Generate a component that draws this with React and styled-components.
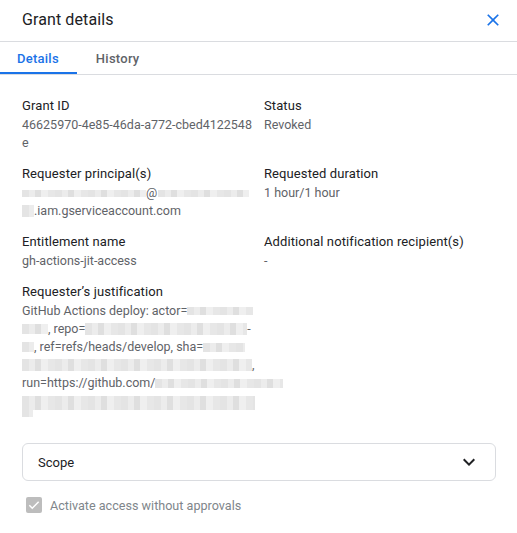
import React from "react";
import styled, { createGlobalStyle } from "styled-components";

const Global = createGlobalStyle`
  html, body { margin: 0; padding: 0; background: #fff; }
  body { font-family: Roboto, "Noto Sans", Arial, sans-serif; -webkit-font-smoothing: antialiased; }
  * { box-sizing: border-box; }
`;

const Panel = styled.div`
  width: 517px;
  height: 533px;
  background: #fff;
  display: flex;
  flex-direction: column;
  overflow: hidden;
`;

const Header = styled.header`
  height: 42px;
  display: flex;
  align-items: center;
  justify-content: space-between;
  padding: 0 14px 2px 22px;
  border-bottom: 1px solid #dadce0;
`;

const Title = styled.h1`
  margin: 0;
  font-size: 16px;
  font-weight: 400;
  color: #202124;
  letter-spacing: 0.1px;
`;

const IconButton = styled.button`
  border: 0;
  background: none;
  padding: 0;
  width: 20px;
  height: 20px;
  display: flex;
  align-items: center;
  justify-content: center;
  color: #1a73e8;
  cursor: pointer;
`;

const TabBar = styled.nav`
  display: flex;
  gap: 2px;
  height: 33px;
  border-bottom: 1px solid #dadce0;
`;

const Tab = styled.div`
  height: 32px;
  padding: 2px 18px 0 17px;
  display: flex;
  align-items: center;
  font-size: 13px;
  font-weight: 500;
  letter-spacing: 0.25px;
  color: ${(p) => (p.$active ? "#1a73e8" : "#5f6368")};
  border-bottom: 2px solid ${(p) => (p.$active ? "#1a73e8" : "transparent")};
`;

const Body = styled.main`
  padding: 21px 21px 0 22px;
  display: flex;
  flex-direction: column;
`;

const Grid = styled.div`
  display: grid;
  grid-template-columns: 232px 1fr;
  column-gap: 10px;
  row-gap: 12px;
`;

const Field = styled.div`
  display: flex;
  flex-direction: column;
  min-width: 0;
`;

const Label = styled.div`
  font-size: 13px;
  line-height: 20px;
  letter-spacing: 0.1px;
  color: #202124;
`;

const Value = styled.div`
  font-size: 12.5px;
  line-height: 18px;
  color: #5f6368;
  word-break: ${(p) => (p.$breakAll ? "break-all" : "normal")};
`;

const Line = styled.div`
  height: 18px;
  white-space: nowrap;
  display: flex;
  align-items: center;
`;

const Redacted = styled.span`
  display: inline-block;
  flex: none;
  width: ${(p) => p.$w}px;
  height: ${(p) => p.$h || 9}px;
  margin: ${(p) => p.$m || "0"};
  align-self: ${(p) => p.$align || "center"};
  background: repeating-linear-gradient(90deg,
      #e4e4e4 0 7px,
      #ececec 7px 13px,
      #dfdfdf 13px 19px,
      #efefef 19px 26px,
      #e7e7e7 26px 33px);
`;

const ScopeBox = styled.button`
  margin-top: 15px;
  height: 38px;
  width: 100%;
  border: 1px solid #dadce0;
  border-radius: 6px;
  background: #fff;
  display: flex;
  align-items: center;
  justify-content: space-between;
  padding: 0 14px 0 15px;
  font-family: inherit;
  font-size: 13px;
  color: #202124;
  cursor: pointer;
`;

const CheckRow = styled.label`
  margin-top: 14px;
  height: 20px;
  display: flex;
  align-items: center;
  gap: 8px;
  padding-left: 4px;
  font-size: 12.6px;
  color: #80868b;
`;

const Box = styled.span`
  width: 16px;
  height: 16px;
  border-radius: 2px;
  background: #bdbdbd;
  display: flex;
  align-items: center;
  justify-content: center;
`;

const CloseIcon = () => (
  <svg width="20" height="20" viewBox="0 0 24 24" fill="currentColor">
    <path d="M19 6.41L17.59 5 12 10.59 6.41 5 5 6.41 10.59 12 5 17.59 6.41 19 12 13.41 17.59 19 19 17.59 13.41 12z" />
  </svg>
);

const ExpandIcon = () => (
  <svg width="24" height="24" viewBox="0 0 24 24" fill="#202124">
    <path d="M16.59 8.59L12 13.17 7.41 8.59 6 10l6 6 6-6z" />
  </svg>
);

const CheckIcon = () => (
  <svg width="14" height="14" viewBox="0 0 24 24" fill="none" stroke="#fff" strokeWidth="2.6">
    <path d="M4 12.5l5 5L20 6.5" />
  </svg>
);

export default function App() {
  return (
    <Panel>
      <Global />
      <Header>
        <Title>Grant details</Title>
        <IconButton aria-label="Close">
          <CloseIcon />
        </IconButton>
      </Header>
      <TabBar>
        <Tab $active>Details</Tab>
        <Tab>History</Tab>
      </TabBar>
      <Body>
        <Grid>
          <Field>
            <Label>Grant ID</Label>
            <Value $breakAll>46625970-4e85-46da-a772-cbed4122548e</Value>
          </Field>
          <Field>
            <Label>Status</Label>
            <Value>Revoked</Value>
          </Field>
          <Field>
            <Label>Requester principal(s)</Label>
            <Value>
              <Line>
                <Redacted $w={124} $h={7} />
                <span>@</span>
                <Redacted $w={91} $h={7} $m="0 0 0 1px" />
              </Line>
              <Line>
                <Redacted $w={12} $h={12} />
                <span>.iam.gserviceaccount.com</span>
              </Line>
            </Value>
          </Field>
          <Field>
            <Label>Requested duration</Label>
            <Value>1 hour/1 hour</Value>
          </Field>
          <Field>
            <Label>Entitlement name</Label>
            <Value>gh-actions-jit-access</Value>
          </Field>
          <Field>
            <Label>Additional notification recipient(s)</Label>
            <Value>-</Value>
          </Field>
          <Field>
            <Label>Requester’s justification</Label>
            <Value>
              <Line>
                <span>GitHub Actions deploy: actor=</span>
                <Redacted $w={66} $h={8} />
              </Line>
              <Line>
                <Redacted $w={26} $h={10} />
                <span>, repo=</span>
                <Redacted $w={162} $h={12} />
                <span>-</span>
              </Line>
              <Line>
                <Redacted $w={12} $h={10} />
                <span>, ref=refs/heads/develop, sha=</span>
                <Redacted $w={42} $h={9} />
              </Line>
              <Line>
                <Redacted $w={230} $h={12} />
                <span>,</span>
              </Line>
              <Line>
                <span>run=https://github.com/</span>
                <Redacted $w={128} $h={9} />
              </Line>
              <Line>
                <Redacted $w={233} $h={14} $align="flex-end" />
              </Line>
              <Line>
                <Redacted $w={11} $h={7} $align="flex-start" />
              </Line>
            </Value>
          </Field>
        </Grid>
        <ScopeBox>
          <span>Scope</span>
          <ExpandIcon />
        </ScopeBox>
        <CheckRow>
          <Box>
            <CheckIcon />
          </Box>
          <span>Activate access without approvals</span>
        </CheckRow>
      </Body>
    </Panel>
  );
}
